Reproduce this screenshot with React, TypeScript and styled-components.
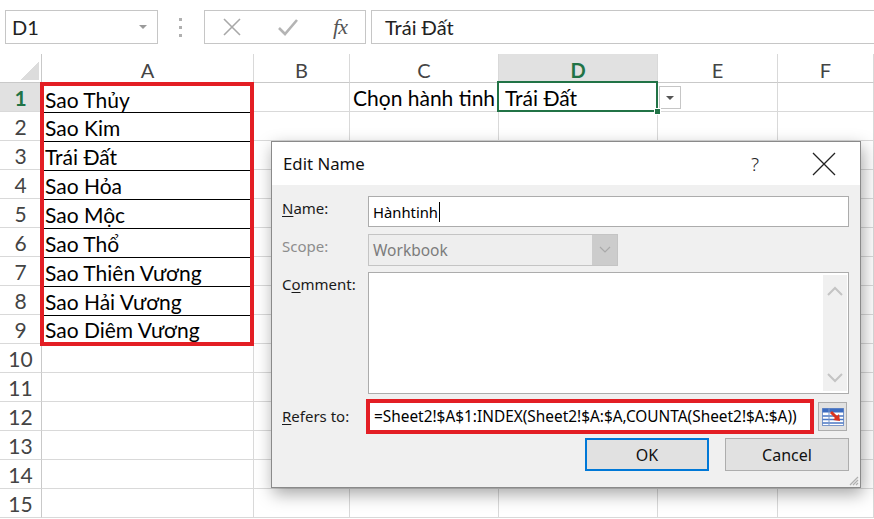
import React from 'react';
import styled, { createGlobalStyle } from 'styled-components';

const GlobalStyle = createGlobalStyle`
    html, body {
        margin: 0;
        padding: 0;
        background: #ffffff;
        overflow: hidden;
    }
    body {
        font-family: 'Lato', 'Noto Sans', sans-serif;
        color: #000;
    }
`;

const COLS = ['A', 'B', 'C', 'D', 'E', 'F'];
const PLANETS = [
    'Sao Thủy',
    'Sao Kim',
    'Trái Đất',
    'Sao Hỏa',
    'Sao Mộc',
    'Sao Thổ',
    'Sao Thiên Vương',
    'Sao Hải Vương',
    'Sao Diêm Vương',
];

const App: React.FC = () => {
    const rows = Array.from({ length: 15 }, (_, i) => i + 1);

    return (
        <Page>
            <GlobalStyle />
            <FormulaBar>
                <NameBox>
                    <span>D1</span>
                    <SmallCaret />
                </NameBox>
                <Grip>
                    <i />
                    <i />
                    <i />
                </Grip>
                <FxBox>
                    <svg width="20" height="20" viewBox="0 0 20 20">
                        <path d="M2 2 L18 18 M18 2 L2 18" stroke="#a8a8a8" strokeWidth="1.6" />
                    </svg>
                    <svg width="22" height="20" viewBox="0 0 22 20">
                        <path d="M2 11 L8 17 L20 3" stroke="#b4b4b4" strokeWidth="2.6" fill="none" />
                    </svg>
                    <Fx>fx</Fx>
                </FxBox>
                <FormulaInput>Trái Đất</FormulaInput>
            </FormulaBar>

            <Sheet>
                <Corner />
                {COLS.map((c) => (
                    <ColHeader key={c} $active={c === 'D'}>
                        {c}
                    </ColHeader>
                ))}

                {rows.map((r) => (
                    <React.Fragment key={r}>
                        <RowHeader $active={r === 1}>{r}</RowHeader>
                        {r > 9 && <Cell />}
                        <Cell />
                        <Cell>{r === 1 ? 'Chọn hành tinh' : ''}</Cell>
                        {r === 1 ? (
                            <Cell $selected>
                                Trái Đất
                                <FillHandle />
                                <ListButton>
                                    <SmallCaret $dark />
                                </ListButton>
                            </Cell>
                        ) : (
                            <Cell />
                        )}
                        <Cell />
                        <Cell />
                    </React.Fragment>
                ))}

                <Range>
                    {PLANETS.map((p) => (
                        <RangeRow key={p}>{p}</RangeRow>
                    ))}
                </Range>
            </Sheet>

            <Dialog>
                <TitleBar>
                    <Title>Edit Name</Title>
                    <TitleTools>
                        <Help>?</Help>
                        <svg width="26" height="26" viewBox="0 0 26 26">
                            <path d="M2 2 L24 24 M24 2 L2 24" stroke="#222" strokeWidth="1.3" />
                        </svg>
                    </TitleTools>
                </TitleBar>

                <Body>
                    <FieldRow>
                        <Label>
                            <u>N</u>ame:
                        </Label>
                        <TextBox>
                            Hànhtinh<Caret />
                        </TextBox>
                    </FieldRow>

                    <FieldRow $gap={7}>
                        <Label $disabled>Scope:</Label>
                        <Select>
                            <span>Workbook</span>
                            <SelectButton>
                                <svg width="12" height="8" viewBox="0 0 12 8">
                                    <path d="M1 1 L6 6 L11 1" stroke="#a9a9a9" strokeWidth="1.2" fill="none" />
                                </svg>
                            </SelectButton>
                        </Select>
                    </FieldRow>

                    <FieldRow $gap={6}>
                        <Label>
                            C<u>o</u>mment:
                        </Label>
                        <TextArea>
                            <ScrollTrack>
                                <svg width="16" height="10" viewBox="0 0 16 10">
                                    <path d="M1 9 L8 2 L15 9" stroke="#c4c4c4" strokeWidth="2" fill="none" />
                                </svg>
                                <svg width="16" height="10" viewBox="0 0 16 10">
                                    <path d="M1 1 L8 8 L15 1" stroke="#c4c4c4" strokeWidth="2" fill="none" />
                                </svg>
                            </ScrollTrack>
                        </TextArea>
                    </FieldRow>

                    <FieldRow $gap={5} $center>
                        <Label $shift={-2}>
                            <u>R</u>efers to:
                        </Label>
                        <RefersBox>=Sheet2!$A$1:INDEX(Sheet2!$A:$A,COUNTA(Sheet2!$A:$A))</RefersBox>
                        <CollapseButton>
                            <svg width="24" height="22" viewBox="0 0 24 22">
                                <rect x="1.5" y="2.5" width="21" height="17" fill="#ffffff" stroke="#7b97c9" />
                                <rect x="1.5" y="2.5" width="21" height="4" fill="#3d6cc0" />
                                <path d="M1.5 10 H22.5 M1.5 13.5 H22.5 M1.5 17 H22.5" stroke="#4b77c4" strokeWidth="1.4" />
                                <path d="M8 2.5 V19.5" stroke="#7b97c9" />
                                <path d="M10 6 L17 13" stroke="#d9331f" strokeWidth="3" />
                                <path d="M19 15 L12 14 L18 8 Z" fill="#d9331f" />
                            </svg>
                        </CollapseButton>
                    </FieldRow>

                    <Buttons>
                        <Button $default>OK</Button>
                        <Button>Cancel</Button>
                    </Buttons>
                </Body>

                <ResizeGrip viewBox="0 0 12 12">
                    <path d="M11 3 L3 11 M11 6 L6 11 M11 9 L9 11" stroke="#b0b0b0" strokeWidth="1.2" />
                </ResizeGrip>
            </Dialog>
        </Page>
    );
};

const Page = styled.div`
    position: relative;
    width: 874px;
    height: 519px;
    overflow: hidden;
    background: #ffffff;
`;

/* ---------- formula bar ---------- */

const FormulaBar = styled.div`
    display: flex;
    align-items: center;
    height: 54px;
    padding-left: 5px;
    box-sizing: border-box;
`;

const NameBox = styled.div`
    display: flex;
    align-items: center;
    justify-content: space-between;
    width: 153px;
    height: 34px;
    box-sizing: border-box;
    border: 1px solid #c6c6c6;
    padding: 0 10px 0 6px;
    font-size: 20px;
    color: #222;
`;

const SmallCaret = styled.div<{ $dark?: boolean }>`
    width: 0;
    height: 0;
    border-left: 4px solid transparent;
    border-right: 4px solid transparent;
    border-top: 4px solid ${(p) => (p.$dark ? '#555' : '#9a9a9a')};
`;

const Grip = styled.div`
    display: flex;
    flex-direction: column;
    gap: 5px;
    margin: 0 22px 0 21px;

    i {
        display: block;
        width: 3px;
        height: 3px;
        background: #b0b0b0;
    }
`;

const FxBox = styled.div`
    display: flex;
    align-items: center;
    justify-content: space-between;
    width: 162px;
    height: 34px;
    box-sizing: border-box;
    border: 1px solid #c6c6c6;
    padding: 0 18px 0 17px;
`;

const Fx = styled.span`
    font-family: 'Liberation Serif', serif;
    font-style: italic;
    font-size: 22px;
    color: #555;
    letter-spacing: -1px;
`;

const FormulaInput = styled.div`
    flex: 1;
    height: 34px;
    margin-left: 5px;
    margin-right: -2px;
    box-sizing: border-box;
    border: 1px solid #c6c6c6;
    padding-left: 13px;
    display: flex;
    align-items: center;
    font-size: 20px;
    color: #222;
`;

/* ---------- sheet grid ---------- */

const Sheet = styled.div`
    display: grid;
    grid-template-columns: 42px 212px 96px 149px 159px 120px 96px;
    grid-template-rows: 29px repeat(15, 29px);
`;

const Corner = styled.div`
    border-right: 1px solid #c9c9c9;
    border-bottom: 1px solid #c9c9c9;
    background: linear-gradient(135deg, transparent 50%, #dcdcdc 50%) no-repeat;
    background-size: 19px 19px;
    background-position: right 2px bottom 2px;
`;

const ColHeader = styled.div<{ $active?: boolean }>`
    display: flex;
    align-items: center;
    justify-content: center;
    padding-top: 4px;
    box-sizing: border-box;
    border-right: 1px solid #d9d9d9;
    border-bottom: 1px solid ${(p) => (p.$active ? '#217346' : '#c9c9c9')};
    background: ${(p) => (p.$active ? '#e1e1e1' : '#ffffff')};
    color: ${(p) => (p.$active ? '#217346' : '#444')};
    font-weight: ${(p) => (p.$active ? 700 : 400)};
    font-size: 20px;
`;

const RowHeader = styled.div<{ $active?: boolean }>`
    display: flex;
    align-items: center;
    justify-content: center;
    box-sizing: border-box;
    border-right: 1px solid ${(p) => (p.$active ? '#217346' : '#c9c9c9')};
    border-bottom: 1px solid #d9d9d9;
    background: ${(p) => (p.$active ? '#e1e1e1' : '#ffffff')};
    color: ${(p) => (p.$active ? '#217346' : '#444')};
    font-weight: ${(p) => (p.$active ? 700 : 400)};
    font-size: 21px;
`;

const Cell = styled.div<{ $selected?: boolean }>`
    position: relative;
    display: flex;
    align-items: center;
    padding-left: 3px;
    box-sizing: border-box;
    border-right: 1px solid #d9d9d9;
    border-bottom: 1px solid #d9d9d9;
    font-size: 21px;
    white-space: nowrap;
    z-index: ${(p) => (p.$selected ? 2 : 0)};

    ${(p) =>
        p.$selected &&
        `
        padding-left: 6px;
        &::after {
            content: '';
            position: absolute;
            inset: -2px -1px -1px -2px;
            border: 2px solid #217346;
            pointer-events: none;
        }
    `}
`;

const FillHandle = styled.div`
    position: absolute;
    right: -4px;
    bottom: -4px;
    width: 5px;
    height: 5px;
    background: #217346;
    border: 1px solid #fff;
    z-index: 3;
`;

const ListButton = styled.div`
    position: absolute;
    left: calc(100% + 2px);
    top: 3px;
    width: 22px;
    height: 23px;
    box-sizing: border-box;
    border: 1px solid #c6c6c6;
    background: #ffffff;
    display: flex;
    align-items: center;
    justify-content: center;
`;

const Range = styled.div`
    grid-column: 2;
    grid-row: 2 / span 9;
    margin: -1px 0 -2px -2px;
    border: 4px solid #e31e24;
    display: flex;
    flex-direction: column;
    background: #ffffff;
    z-index: 1;
`;

const RangeRow = styled.div`
    height: 29px;
    box-sizing: border-box;
    border-bottom: 1px solid #000;
    display: flex;
    align-items: center;
    padding-left: 1px;
    font-size: 21px;
    white-space: nowrap;

    &:first-child {
        height: 27px;
    }

    &:last-child {
        flex: 1;
        border-bottom: none;
    }
`;

/* ---------- dialog ---------- */

const Dialog = styled.div`
    position: absolute;
    left: 271px;
    top: 141px;
    width: 590px;
    height: 347px;
    box-sizing: border-box;
    border: 1px solid #8a8a8a;
    background: #f0f0f0;
    box-shadow: 2px 6px 16px rgba(0, 0, 0, 0.35);
    font-family: 'Noto Sans', 'Open Sans', sans-serif;
    display: flex;
    flex-direction: column;
    z-index: 10;
`;

const TitleBar = styled.div`
    height: 43px;
    background: #ffffff;
    display: flex;
    align-items: center;
    justify-content: space-between;
    padding: 0 23px 0 11px;
`;

const Title = styled.div`
    font-size: 16.8px;
    color: #111;
    margin-top: -1px;
`;

const TitleTools = styled.div`
    display: flex;
    align-items: center;
    gap: 52px;
`;

const Help = styled.span`
    font-size: 19px;
    color: #222;
    font-weight: 300;
`;

const Body = styled.div`
    flex: 1;
    display: flex;
    flex-direction: column;
    padding: 11px 11px 0 10px;
`;

const FieldRow = styled.div<{ $gap?: number; $center?: boolean }>`
    display: flex;
    align-items: ${(p) => (p.$center ? 'center' : 'flex-start')};
    margin-top: ${(p) => p.$gap ?? 0}px;
`;

const Label = styled.div<{ $disabled?: boolean; $shift?: number }>`
    width: 86px;
    flex-shrink: 0;
    font-size: 15px;
    color: ${(p) => (p.$disabled ? '#8d8d8d' : '#1a1a1a')};
    padding-top: ${(p) => (p.$shift !== undefined ? 0 : 2)}px;
    margin-top: ${(p) => p.$shift ?? 0}px;

    u {
        text-underline-offset: 2px;
    }
`;

const TextBox = styled.div`
    flex: 1;
    height: 31px;
    box-sizing: border-box;
    border: 1px solid #acacac;
    background: #ffffff;
    display: flex;
    align-items: center;
    padding-left: 4px;
    font-size: 14.8px;
`;

const Caret = styled.span`
    display: inline-block;
    width: 1px;
    height: 20px;
    background: #000;
    margin-left: 1px;
`;

const Select = styled.div`
    width: 250px;
    height: 32px;
    box-sizing: border-box;
    border: 1px solid #c4c4c4;
    background: #eeeeee;
    display: flex;
    align-items: center;
    justify-content: space-between;
    padding-left: 4px;
    font-size: 15.5px;
    color: #7c7c7c;
`;

const SelectButton = styled.div`
    width: 25px;
    height: 100%;
    background: #cccccc;
    display: flex;
    align-items: center;
    justify-content: center;
`;

const TextArea = styled.div`
    flex: 1;
    height: 122px;
    box-sizing: border-box;
    border: 1px solid #acacac;
    background: #ffffff;
    display: flex;
    justify-content: flex-end;
    padding: 2px 1px 2px 0;
`;

const ScrollTrack = styled.div`
    width: 24px;
    background: #f0f0f0;
    display: flex;
    flex-direction: column;
    align-items: center;
    justify-content: space-between;
    padding: 11px 0 8px;
`;

const RefersBox = styled.div`
    width: 448px;
    height: 35px;
    margin-left: -2px;
    box-sizing: border-box;
    border: 4px solid #e31e24;
    background: #ffffff;
    display: flex;
    align-items: center;
    padding-left: 4px;
    font-size: 15.4px;
    white-space: nowrap;
`;

const CollapseButton = styled.div`
    width: 29px;
    height: 29px;
    margin-left: 4px;
    box-sizing: border-box;
    border: 1px solid #adadad;
    background: #e1e1e1;
    display: flex;
    align-items: center;
    justify-content: center;
`;

const Buttons = styled.div`
    display: flex;
    justify-content: flex-end;
    gap: 16px;
    margin-top: 4px;
`;

const Button = styled.div<{ $default?: boolean }>`
    width: 124px;
    height: 33px;
    box-sizing: border-box;
    border: ${(p) => (p.$default ? '2px solid #0078d7' : '1px solid #adadad')};
    background: #e1e1e1;
    display: flex;
    align-items: center;
    justify-content: center;
    font-size: 16px;
    color: #111;
`;

const ResizeGrip = styled.svg`
    position: absolute;
    right: 1px;
    bottom: 1px;
    width: 12px;
    height: 12px;
`;

export default App;
